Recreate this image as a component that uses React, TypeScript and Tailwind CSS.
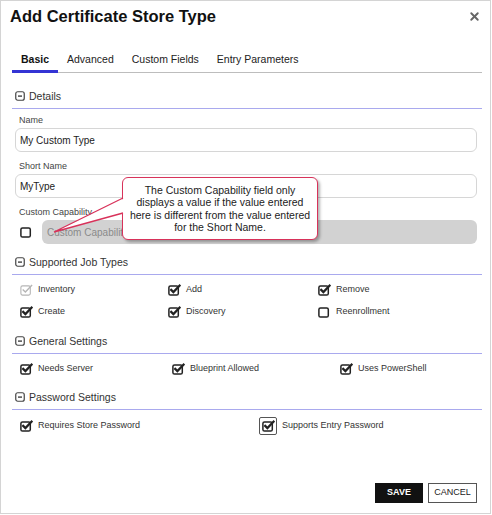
import { X } from "lucide-react";

const font = { fontFamily: '"Liberation Sans", Arial, sans-serif' };

function MinusBox() {
  return (
    <svg width="10" height="10" viewBox="0 0 10 10" className="shrink-0">
      <rect x="0.75" y="0.75" width="8.5" height="8.5" rx="2" fill="none" stroke="#444" strokeWidth="1.2" />
      <rect x="3" y="4.4" width="4" height="1.4" fill="#444" />
    </svg>
  );
}

function CheckIcon({ checked = true, disabled = false }: { checked?: boolean; disabled?: boolean }) {
  const c = disabled ? "#b5b5b5" : "#222";
  return (
    <svg width="13" height="12" viewBox="0 0 13 12" className="shrink-0">
      <rect x="0.9" y="1.9" width="9.4" height="9.2" rx="1.6" fill="none" stroke={c} strokeWidth={disabled ? 1.1 : 1.5} />
      {checked && (
        <path d="M3.2 5.9 L5.4 8.1 L11.6 1.6" fill="none" stroke={c} strokeWidth={disabled ? 1.4 : 2.2} strokeLinecap="square" />
      )}
    </svg>
  );
}

function Check({ label, checked = true, disabled = false }: { label: string; checked?: boolean; disabled?: boolean }) {
  return (
    <div className="flex h-[22px] items-center">
      <CheckIcon checked={checked} disabled={disabled} />
      <span className="ml-[5px] text-[9px] text-[#333]">{label}</span>
    </div>
  );
}

function Section({ title, top = "mt-[11px]" }: { title: string; top?: string }) {
  return (
    <div className={`${top} flex items-center gap-[4px] border-b border-[#a9a9ee] pb-[5px] pl-[3px]`}>
      <MinusBox />
      <span className="text-[10.5px] leading-[14px] text-[#333]">{title}</span>
    </div>
  );
}

function Field({ label, value }: { label: string; value: string }) {
  return (
    <>
      <div className="ml-[7px] mt-[8px] text-[9px] leading-[12px] text-[#444]">{label}</div>
      <div className="mx-[3px] mr-[5px] mt-[2px] flex h-[24px] items-center rounded-md border border-[#d6d6d6] px-[4px] text-[10px] text-[#222]">
        {value}
      </div>
    </>
  );
}

export default function App() {
  const tabs = ["Basic", "Advanced", "Custom Fields", "Entry Parameters"];

  return (
    <div style={font} className="relative flex h-[514px] w-[491px] flex-col border border-[#d4d4d4] bg-white pl-[11px] pr-[8px] pt-[5px]">
      {/* Title */}
      <div className="flex items-center justify-between">
        <h1 className="-ml-[2px] text-[16.5px] font-bold leading-[20px] text-[#111]">Add Certificate Store Type</h1>
        <X className="mr-[1px] h-[13px] w-[13px] text-[#666]" strokeWidth={3.5} />
      </div>

      {/* Tabs */}
      <div className="mt-[23px] flex border-b border-[#bdbdbd]">
        {tabs.map((t, i) => (
          <div
            key={t}
            className={
              i === 0
                ? "-mb-px flex h-[24px] items-center border-b-[3px] border-[#3434d4] px-[9px] text-[10.5px] font-bold text-[#111]"
                : "-mb-px flex h-[24px] items-center border-b-[3px] border-transparent px-[9px] text-[10.5px] text-[#222]"
            }
          >
            {t}
          </div>
        ))}
      </div>

      {/* Details */}
      <Section title="Details" top="mt-[16px]" />
      <div className="mt-[-3px]" />
      <Field label="Name" value="My Custom Type" />
      <Field label="Short Name" value="MyType" />
      <div className="ml-[7px] mt-[8px] text-[9px] leading-[12px] text-[#444]">Custom Capability</div>
      <div className="mt-[2px] flex h-[24px] items-center pl-[8px] pr-[5px]">
        <CheckIcon checked={false} />
        <div className="ml-[9px] flex h-full flex-1 items-center rounded-md bg-[#d2d2d2] px-[5px] text-[10px] text-[#8a8a8a]">
          Custom Capability
        </div>
      </div>

      {/* Job types */}
      <Section title="Supported Job Types" />
      <div className="mt-[4px] grid grid-cols-[148px_150px_1fr] pl-[8px]">
        <Check label="Inventory" disabled />
        <Check label="Add" />
        <Check label="Remove" />
        <Check label="Create" />
        <Check label="Discovery" />
        <Check label="Reenrollment" checked={false} />
      </div>

      {/* General */}
      <Section title="General Settings" />
      <div className="mt-[4px] grid grid-cols-[152px_168px_1fr] pl-[8px]">
        <Check label="Needs Server" />
        <Check label="Blueprint Allowed" />
        <Check label="Uses PowerShell" />
      </div>

      {/* Password */}
      <Section title="Password Settings" top="mt-[10px]" />
      <div className="mt-[5px] grid grid-cols-[239px_1fr] pl-[8px]">
        <Check label="Requires Store Password" />
        <div className="flex h-[22px] items-center">
          <div className="flex h-[18px] w-[18px] items-center justify-center rounded-[2px] border border-[#555]">
            <CheckIcon />
          </div>
          <span className="ml-[5px] text-[9px] text-[#333]">Supports Entry Password</span>
        </div>
      </div>

      {/* Buttons */}
      <div className="mb-[10px] mr-[5px] mt-auto flex justify-end gap-[5px]">
        <button className="h-[20px] w-[48px] bg-[#111] text-[9px] font-bold text-white">SAVE</button>
        <button className="h-[20px] w-[49px] border border-[#555] bg-white text-[9px] text-[#222]">CANCEL</button>
      </div>

      {/* Callout */}
      <div className="absolute left-[121px] top-[176px] w-[196px] rounded-md border-[1.5px] border-[#d8325a] bg-white py-[6px] text-center text-[10.5px] leading-[12.3px] text-[#222] shadow-[2px_2px_3px_rgba(0,0,0,0.3)]">
        The Custom Capability field only
        <br />
        displays a value if the value entered
        <br />
        here is different from the value entered
        <br />
        for the Short Name.
      </div>
      <svg className="absolute left-0 top-0" width="140" height="250" viewBox="0 0 140 250">
        <polygon points="124,197 53,231 124,212" fill="white" />
        <polyline points="122,197 53,231 122,212" fill="none" stroke="#d8325a" strokeWidth="1.3" />
      </svg>
    </div>
  );
}
